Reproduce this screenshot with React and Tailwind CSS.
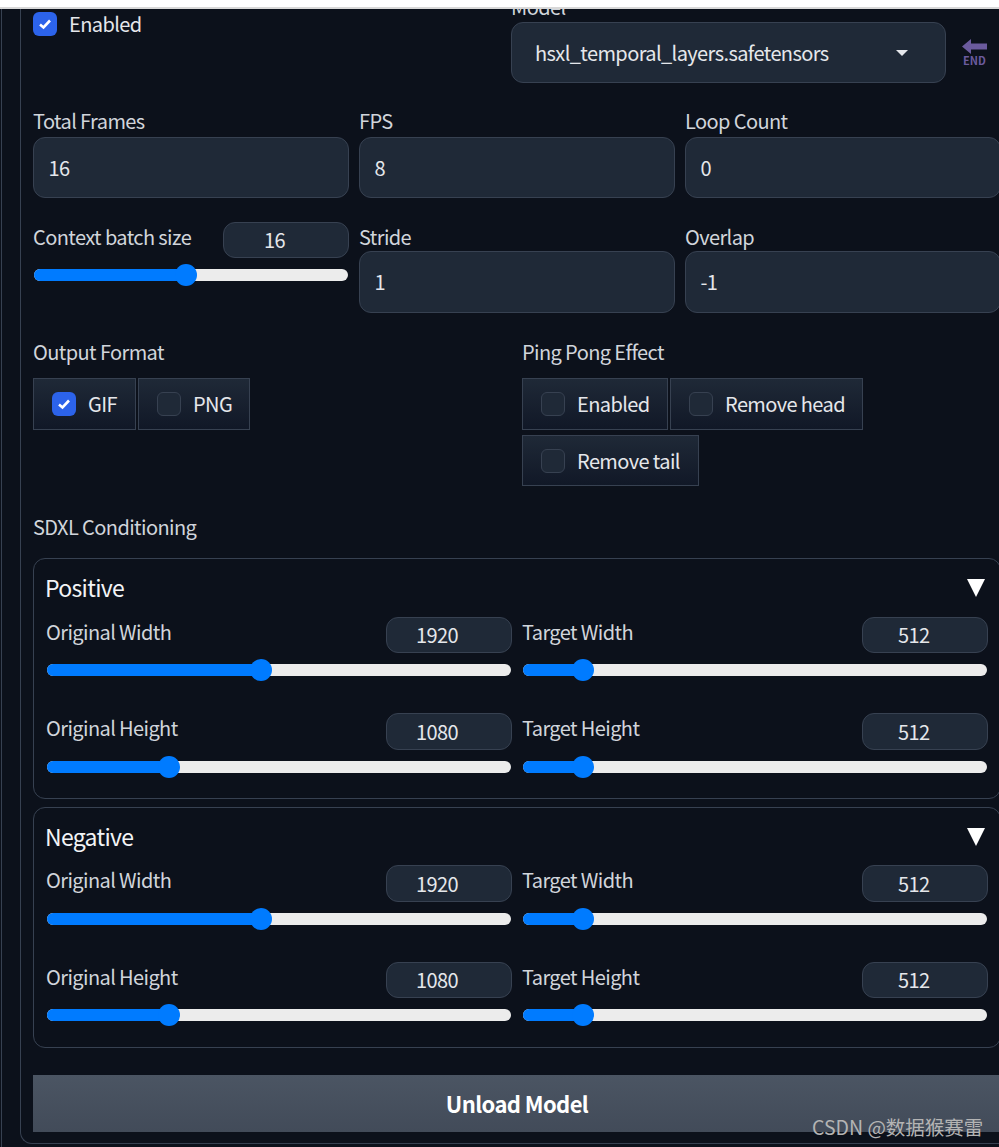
const font = { fontFamily: '"Noto Sans CJK SC", "Noto Sans", sans-serif' };

function Check({ on }) {
  return on ? (
    <span className="flex h-6 w-6 shrink-0 items-center justify-center rounded-md bg-[#2c63ea]">
      <svg width="16" height="16" viewBox="0 0 16 16" fill="none">
        <path d="M3 8.5 L6.5 11.5 L13 4.5" stroke="white" strokeWidth="2.6" />
      </svg>
    </span>
  ) : (
    <span className="h-6 w-6 shrink-0 rounded-md border border-[#374151] bg-[#1f2937]" />
  );
}

function Chip({ w, h = "h-[52px]", on, label }) {
  return (
    <div className={`flex ${w} ${h} items-center gap-3 border border-[#374151] bg-gradient-to-b from-[#1f2937] to-[#111827] pl-[18px] text-[#e5e7eb]`}>
      <Check on={on} />
      <span>{label}</span>
    </div>
  );
}

function Field({ label, value, h = "h-[61px]", top = "mt-0" }) {
  return (
    <div className="w-[316px]">
      <div className="h-[20px] leading-[20px] text-[#d1d5db]">{label}</div>
      <div className={`${top} flex ${h} items-center rounded-xl border border-[#374151] bg-[#1f2937] pl-[14.5px] text-[#e5e7eb]`}>
        {value}
      </div>
    </div>
  );
}

function NumBox({ value, pad = "pl-[29px]", h = "h-9" }) {
  return (
    <div className={`flex w-[126px] ${h} items-center rounded-xl border border-[#374151] bg-[#1f2937] text-[#e5e7eb] ${pad}`}>
      {value}
    </div>
  );
}

function Slider({ at }) {
  return (
    <div className="px-px">
      <div className="relative h-3 rounded-full bg-[#ececec]">
        <div className="h-3 rounded-full bg-[#007bff]" style={{ width: at + "px" }} />
        <div className="absolute top-[-5px] h-[22px] w-[22px] rounded-full bg-[#007bff]" style={{ left: at - 11 + "px" }} />
      </div>
    </div>
  );
}

function Cond({ label, value, at, pad, boxH = "h-9" }) {
  return (
    <div className="w-[466px]">
      <div className="flex items-start justify-between">
        <span className="mt-[1px] h-7 leading-[28px] text-[#d1d5db]">{label}</span>
        <NumBox value={value} pad={pad} h={boxH} />
      </div>
      <div className="mt-[11px]">
        <Slider at={at} />
      </div>
    </div>
  );
}

function Box({ title, cls, head, h1, h2 }) {
  return (
    <div className={`${cls} h-[241px] w-[968px] rounded-xl border border-[#374151] px-3`}>
      <div className={`flex ${head} items-start justify-between pt-[13px]`}>
        <span className="-ml-px text-[23px] leading-[30px] tracking-[-0.7px] text-[#f3f4f6]">{title}</span>
        <svg width="18" height="18" viewBox="0 0 18 18" className="mr-[3px] mt-[7px]">
          <polygon points="0,0 18,0 9,18" fill="white" />
        </svg>
      </div>
      <div className="flex gap-[10px]">
        <Cond label="Original Width" value="1920" at={214} boxH={h1} />
        <Cond label="Target Width" value="512" at={60} pad="pl-[35px]" boxH={h1} />
      </div>
      <div className="mt-[37px] flex gap-[10px]">
        <Cond label="Original Height" value="1080" at={122} boxH={h2} />
        <Cond label="Target Height" value="512" at={60} pad="pl-[35px]" boxH={h2} />
      </div>
    </div>
  );
}

export default function App() {
  return (
    <div style={font} className="relative h-[1147px] w-[999px] overflow-hidden bg-[#0c111b] text-[20px] tracking-[-0.6px]">
      <div className="h-[9px] border-b-2 border-[#d8d8d8] bg-white" />
      <div className="ml-px h-[1138px] border-l border-[#374151] pl-[18px]">
        <div className="h-[1135px] w-[1000px] rounded-bl-xl border-b border-l border-[#374151] pl-3">
          <div className="flex h-[74px]">
            <div className="mt-[3px] flex h-6 w-[478px] items-center gap-3 text-[#e5e7eb]">
              <Check on />
              <span>Enabled</span>
            </div>
            <div className="h-[74px]">
              <div className="h-[13px] overflow-hidden">
                <div className="-mt-[12px] leading-[20px] text-[#d1d5db]">Model</div>
              </div>
              <div className="flex items-center">
                <div className="flex h-[61px] w-[435px] items-center justify-between rounded-xl border border-[#374151] bg-[#1f2937] pl-[23px] pr-[37px] text-[#e5e7eb]">
                  <span>hsxl_temporal_layers.safetensors</span>
                  <svg width="12" height="6" viewBox="0 0 12 6"><polygon points="0,0 12,0 6,6" fill="#e5e7eb" /></svg>
                </div>
                <div className="ml-4 flex w-[25px] flex-col items-center">
                  <svg width="25" height="15" viewBox="0 0 25 15"><polygon points="0,7.5 9,0 9,4.5 25,4.5 25,10.5 9,10.5 9,15" fill="#6b5b9e" /></svg>
                  <span className="text-[11px] font-bold leading-[12px] tracking-normal text-[#6b5b9e]">END</span>
                </div>
              </div>
            </div>
          </div>

          <div className="mt-[28px] flex gap-[10px]">
            <Field label="Total Frames" value="16" top="mt-[6px]" />
            <Field label="FPS" value="8" top="mt-[6px]" />
            <Field label="Loop Count" value="0" top="mt-[6px]" />
          </div>

          <div className="mt-[24px] flex items-start gap-[10px]">
            <div className="w-[316px]">
              <div className="flex items-start justify-between">
                <span className="mt-[5px] leading-[20px] text-[#d1d5db]">Context batch size</span>
                <NumBox value="16" pad="pl-[40px]" />
              </div>
              <div className="mt-[11px]"><Slider at={152} /></div>
            </div>
            <div className="pt-[5px]"><Field label="Stride" value="1" h="h-[62px]" top="mt-[4px]" /></div>
            <div className="pt-[5px]"><Field label="Overlap" value="-1" h="h-[62px]" top="mt-[4px]" /></div>
          </div>

          <div className="mt-[29px] flex gap-[10px]">
            <div className="w-[479px]">
              <div className="leading-[20px] text-[#d1d5db]">Output Format</div>
              <div className="mt-4 flex gap-[2px]">
                <Chip w="w-[103px]" on label="GIF" />
                <Chip w="w-[112px]" label="PNG" />
              </div>
            </div>
            <div className="w-[479px]">
              <div className="leading-[20px] text-[#d1d5db]">Ping Pong Effect</div>
              <div className="mt-4 flex flex-wrap gap-x-[2px] gap-y-[5px]">
                <Chip w="w-[146px]" label="Enabled" />
                <Chip w="w-[193px]" label="Remove head" />
                <Chip w="w-[177px]" h="h-[51px]" label="Remove tail" />
              </div>
            </div>
          </div>

          <div className="mt-[31px] leading-[20px] text-[#d1d5db]">SDXL Conditioning</div>

          <Box title="Positive" cls="mt-[21px]" head="h-[58px]" h1="h-9" h2="h-[37px]" />
          <Box title="Negative" cls="mt-[8px]" head="h-[57px]" h1="h-[37px]" h2="h-9" />

          <div className="mt-[27px] flex h-[57px] w-[968px] items-center justify-center bg-gradient-to-b from-[#4b5563] to-[#424b59] text-[22px] font-bold text-white">
            Unload Model
          </div>
        </div>
      </div>
      <div className="absolute left-[812px] top-[1113px] text-[19.5px] leading-[28px] tracking-normal text-[#b4b4b4]">CSDN @数据猴赛雷</div>
    </div>
  );
}
